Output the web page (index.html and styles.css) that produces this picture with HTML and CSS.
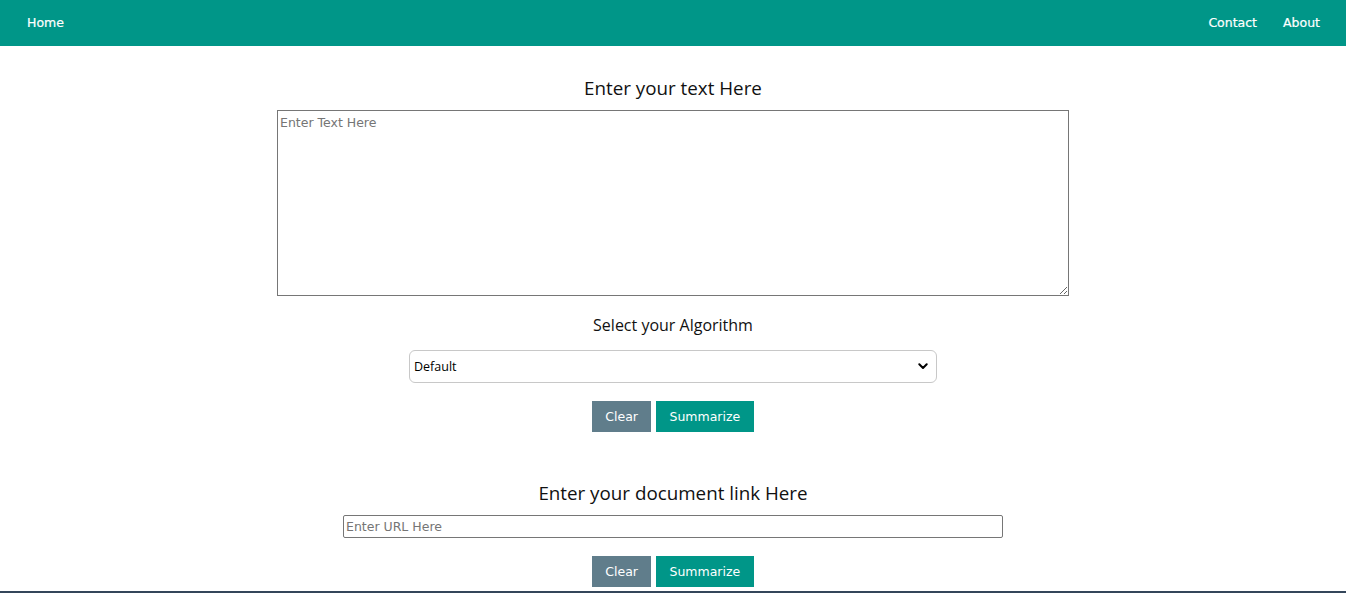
FILE: index.html
```html
<!DOCTYPE html>
<html lang="en">
<head>
<meta charset="utf-8">
<title>Text Summarizer</title>
<link rel="stylesheet" href="styles.css">
</head>
<body>
<nav class="topbar">
  <a class="nav-item" href="#">Home</a>
  <div class="nav-right">
    <a class="nav-item" href="#">Contact</a>
    <a class="nav-item" href="#">About</a>
  </div>
</nav>
<main class="page">
  <h2 class="heading heading-first">Enter your text Here</h2>
  <textarea class="text-input" placeholder="Enter Text Here"></textarea>
  <p class="label">Select your Algorithm</p>
  <div class="select-wrap">
    <select class="algo-select">
      <option>Default</option>
    </select>
    <svg class="chevron" width="10" height="7" viewBox="0 0 10 7"><path d="M1.3 1.3 L5 5 L8.7 1.3" fill="none" stroke="#000" stroke-width="2" stroke-linecap="round" stroke-linejoin="round"/></svg>
  </div>
  <div class="actions">
    <button class="btn btn-grey">Clear</button>
    <button class="btn btn-teal">Summarize</button>
  </div>
  <h2 class="heading heading-second">Enter your document link Here</h2>
  <input class="url-input" type="text" placeholder="Enter URL Here">
  <div class="actions">
    <button class="btn btn-grey">Clear</button>
    <button class="btn btn-teal">Summarize</button>
  </div>
  <div class="bottom-line"></div>
</main>
</body>
</html>
```
FILE: styles.css
```css
html, body {
  margin: 0;
  padding: 0;
  background: #fff;
}
body {
  font-family: "DejaVu Sans", Verdana, sans-serif;
  font-size: 12.5px;
  color: #000;
  overflow: hidden;
}
.topbar {
  display: flex;
  align-items: center;
  justify-content: space-between;
  height: 46px;
  padding: 0 13px 0 14px;
  background: #009688;
}
.nav-right {
  display: flex;
}
.nav-item {
  color: #fff;
  text-decoration: none;
  padding: 0 13px;
  line-height: 46px;
  font-size: 12.5px;
  -webkit-text-stroke: 0.2px #fff;
}
.page {
  display: flex;
  flex-direction: column;
  align-items: center;
}
.heading {
  font-family: "Open Sans", "Noto Sans", sans-serif;
  font-weight: 400;
  font-size: 18.8px;
  line-height: 24px;
  color: #111;
  margin: 0;
}
.heading-first {
  margin-top: 30px;
}
.text-input {
  box-sizing: border-box;
  width: 792px;
  height: 186px;
  margin-top: 10px;
  border: 1px solid #767676;
  padding: 4px 2px;
  font-family: "DejaVu Sans", Verdana, sans-serif;
  font-size: 12.5px;
  outline: none;
}
.text-input::placeholder,
.url-input::placeholder {
  color: #757575;
}
.label {
  font-family: "Open Sans", "Noto Sans", sans-serif;
  font-size: 16px;
  line-height: 22px;
  color: #111;
  margin: 18px 0 0;
}
.select-wrap {
  position: relative;
  margin-top: 14px;
  width: 528px;
  height: 33px;
}
.algo-select {
  appearance: none;
  -webkit-appearance: none;
  box-sizing: border-box;
  width: 100%;
  height: 100%;
  border: 1px solid #c8c8c8;
  border-radius: 6px;
  background: #fff;
  padding: 0 4px;
  font-family: "Open Sans", "Noto Sans", sans-serif;
  font-size: 12.5px;
  color: #000;
}
.chevron {
  position: absolute;
  right: 9px;
  top: 13px;
}
.actions {
  display: flex;
  gap: 5px;
  margin-top: 18px;
}
.btn {
  height: 31px;
  padding: 0 13px;
  border: none;
  color: #fff;
  font-family: "DejaVu Sans", Verdana, sans-serif;
  font-size: 12.5px;
  cursor: pointer;
}
.btn-grey {
  background: #607d8b;
}
.btn-teal {
  background: #009688;
  padding: 0 13.5px;
}
.heading-second {
  margin-top: 49px;
}
.url-input {
  box-sizing: border-box;
  width: 660px;
  height: 23px;
  margin-top: 10px;
  border: 1px solid #767676;
  border-radius: 2px;
  padding: 0 2px;
  font-family: "DejaVu Sans", Verdana, sans-serif;
  font-size: 12.5px;
  outline: none;
}
.bottom-line {
  align-self: stretch;
  height: 2px;
  margin-top: 4px;
  background: #34465a;
}
```
